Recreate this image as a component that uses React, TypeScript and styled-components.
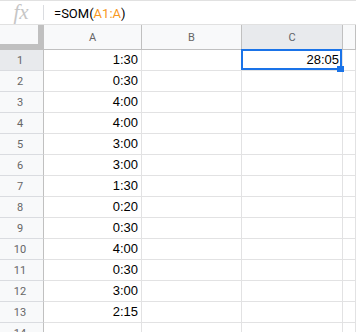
import React from "react";
import styled, { createGlobalStyle } from "styled-components";

const GlobalStyle = createGlobalStyle`
  html, body {
    margin: 0;
    padding: 0;
    background: #fff;
    overflow: hidden;
    font-family: "Liberation Sans", Arial, sans-serif;
  }
`;

const times = [
  "1:30",
  "0:30",
  "4:00",
  "4:00",
  "3:00",
  "3:00",
  "1:30",
  "0:20",
  "0:30",
  "4:00",
  "0:30",
  "3:00",
  "2:15",
];

const columns = ["A", "B", "C"];

export default function App() {
  return (
    <>
      <GlobalStyle />
      <FormulaBar>
        <FxLabel>fx</FxLabel>
        <Divider />
        <FormulaText>
          =SOM(<RangeRef>A1:A</RangeRef>)
        </FormulaText>
      </FormulaBar>
      <Sheet>
        <Corner />
        {columns.map((c) => (
          <ColHeader key={c} $selected={c === "C"}>
            {c}
          </ColHeader>
        ))}
        <ColHeader $selected={false} />
        {[...times, ""].map((t, i) => (
          <React.Fragment key={i}>
            <RowHeader $selected={i === 0}>{i + 1}</RowHeader>
            <Cell>{t}</Cell>
            <Cell />
            <Cell>
              {i === 0 && (
                <>
                  28:05
                  <Selection />
                  <FillHandle />
                </>
              )}
            </Cell>
            <Cell />
          </React.Fragment>
        ))}
      </Sheet>
    </>
  );
}

const FormulaBar = styled.div`
  display: flex;
  align-items: center;
  height: 23px;
  border-top: 1px solid #e1e1e1;
  border-bottom: 1px solid #e1e1e1;
`;

const FxLabel = styled.div`
  width: 43px;
  text-align: center;
  font-family: "Liberation Serif", "Times New Roman", serif;
  font-style: italic;
  font-size: 21px;
  line-height: 23px;
  color: #c6c6c6;
  padding-right: 1px;
  box-sizing: border-box;
`;

const Divider = styled.div`
  width: 1px;
  height: 15px;
  background: #dadce0;
`;

const FormulaText = styled.div`
  padding-left: 10px;
  font-family: Roboto, "Liberation Sans", sans-serif;
  font-size: 13px;
  color: #000;
  padding-top: 1px;
`;

const RangeRef = styled.span`
  color: #f7981d;
`;

const Sheet = styled.div`
  display: grid;
  grid-template-columns: 44px 98px 100px 101px 1fr;
  grid-template-rows: 25px;
  grid-auto-rows: 21px;
`;

const Corner = styled.div`
  box-sizing: border-box;
  background: #f8f9fa;
  border-right: 6px solid #c0c0c0;
  border-bottom: 6px solid #c0c0c0;
`;

const ColHeader = styled.div<{ $selected: boolean }>`
  box-sizing: border-box;
  display: flex;
  align-items: center;
  justify-content: center;
  padding-top: 1px;
  background: ${(p) => (p.$selected ? "#e8eaed" : "#f8f9fa")};
  color: ${(p) => (p.$selected ? "#5f6368" : "#666")};
  border-right: 1px solid #c0c0c0;
  border-bottom: 1px solid #c0c0c0;
  font-family: Roboto, "Liberation Sans", sans-serif;
  font-size: 11px;
`;

const RowHeader = styled.div<{ $selected: boolean }>`
  box-sizing: border-box;
  display: flex;
  align-items: center;
  justify-content: center;
  padding-right: 3px;
  background: ${(p) => (p.$selected ? "#e8eaed" : "#f8f9fa")};
  color: #666;
  border-right: 1px solid #c0c0c0;
  border-bottom: 1px solid #dadce0;
  font-family: Roboto, "Liberation Sans", sans-serif;
  font-size: 11px;
`;

const Cell = styled.div`
  position: relative;
  box-sizing: border-box;
  border-right: 1px solid #e2e2e3;
  border-bottom: 1px solid #e2e2e3;
  padding-right: 3px;
  text-align: right;
  font-size: 13px;
  line-height: 20px;
  color: #000;
`;

const Selection = styled.div`
  position: absolute;
  top: -1px;
  left: -1px;
  right: 0;
  bottom: 0;
  border: 2px solid #1a73e8;
  z-index: 1;
`;

const FillHandle = styled.div`
  position: absolute;
  right: -2px;
  bottom: -2px;
  width: 7px;
  height: 6px;
  background: #1a73e8;
  z-index: 2;
`;
